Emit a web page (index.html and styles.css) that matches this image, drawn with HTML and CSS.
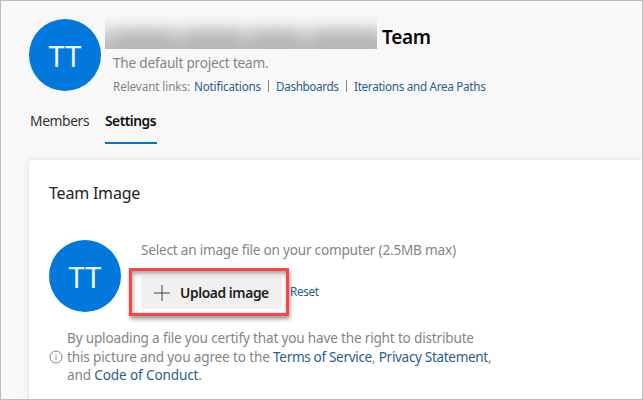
FILE: index.html
```html
<!DOCTYPE html>
<html lang="en">
<head>
<meta charset="utf-8">
<title>Team settings</title>
<link rel="stylesheet" href="styles.css">
</head>
<body>
<div class="page">
  <header class="header">
    <div class="avatar">TT</div>
    <div class="info">
      <div class="title-row">
        <div class="redacted"><i class="smudge s1"></i><i class="smudge s2"></i><i class="smudge s3"></i><i class="smudge s4"></i></div>
        <h1 class="title">Team</h1>
      </div>
      <p class="description">The default project team.</p>
      <nav class="links"><span class="label">Relevant links:</span><a class="l-notif">Notifications</a><i class="sep"></i><a class="l-dash">Dashboards</a><i class="sep"></i><a class="l-iter">Iterations and Area Paths</a></nav>
    </div>
  </header>
  <nav class="tabs">
    <a class="tab">Members</a>
    <a class="tab active">Settings</a>
  </nav>
  <main class="card">
    <h2 class="card-title">Team Image</h2>
    <div class="image-row">
      <div class="avatar">TT</div>
      <div class="picker">
        <p class="hint">Select an image file on your computer (2.5MB max)</p>
        <div class="actions">
          <button class="upload">
            <svg class="plus" viewBox="0 0 16 16"><path d="M8 0v16M0 8h16"/></svg>
            <span>Upload image</span>
            <i class="highlight"></i>
          </button>
          <a class="reset">Reset</a>
        </div>
      </div>
    </div>
    <div class="notice">
      <svg class="info-icon" viewBox="0 0 14 14"><circle cx="7" cy="7" r="6"/><path d="M7 6v4.2M7 3.6v1.2"/></svg>
      <p class="notice-text"><span class="n1">By uploading a file you certify that you have the right to distribute</span><br><span class="n2">this picture and you agree to the <a>Terms of Service</a>, <a>Privacy Statement</a>,</span><br><span class="n3">and <a>Code of Conduct</a>.</span></p>
    </div>
  </main>
</div>
</body>
</html>
```
FILE: styles.css
```css
* { box-sizing: border-box; }
body { margin: 0; font-family: "Noto Sans", "Open Sans", sans-serif; }
h1, h2, p { margin: 0; font-weight: 400; }
a { color: #286090; }
.page {
  width: 643px; height: 400px; overflow: hidden;
  border: 1px solid #bdbdbd; background: #f8f8f8;
  white-space: nowrap;
}
.header { display: flex; height: 90px; margin: 14px 0 0 28px; }
.avatar {
  flex: none; width: 72px; height: 72px; border-radius: 50%;
  background: #0078dc; color: #eef6fd;
  font-size: 29px; line-height: 73px; text-align: center;
}
.header .avatar { margin-top: 4px; }
.info { margin-left: 4px; }
.title-row { display: flex; height: 34px; }
.redacted {
  position: relative; overflow: hidden; width: 272px; height: 34px;
  background: linear-gradient(#f7f7f7, #f0f0f0 20%, #d8d8d8 50%, #c2c2c2 80%, #bababa);
}
.smudge { position: absolute; top: 17px; height: 14px; background: #a4a4a4; filter: blur(7px); opacity: .5; }
.s1 { left: 12px; width: 54px; }
.s2 { left: 80px; width: 55px; }
.s3 { left: 149px; width: 43px; }
.s4 { left: 208px; width: 64px; }
.title { margin-left: 5px; padding-top: 8px; color: #080808; font-size: 19px; line-height: 28px; font-weight: 600; letter-spacing: -.3px; }
.description { margin: 4px 0 0 8px; color: #858585; font-size: 13.6px; line-height: 20px; letter-spacing: -.2px; }
.links { display: flex; align-items: center; height: 20px; margin: 3px 0 0 8px; font-size: 11.7px; line-height: 20px; letter-spacing: -.2px; }
.label { width: 81px; color: #858585; letter-spacing: -.1px; }
.l-notif { width: 67px; }
.l-dash { width: 63px; letter-spacing: -.35px; }
.l-iter { letter-spacing: -.3px; }
.sep { width: 1px; height: 12px; margin: 0 7px; background: #858585; }
.tabs { display: flex; height: 39px; margin-left: 29px; font-size: 13.8px; line-height: 31px; }
.tab { width: 75px; color: #303030; letter-spacing: -.38px; }
.tab.active { color: #101010; font-weight: 600; width: 52px; letter-spacing: -.5px; border-bottom: 2px solid #0078c8; }
.card {
  height: 260px; margin: 16px 0 0 28px; padding: 20px 0 0 20px;
  background: #fff; border-radius: 4px 0 0 0; box-shadow: 0 0 6px rgba(0,0,0,.11);
}
.card-title { color: #222; font-size: 16px; line-height: 26px; letter-spacing: -.2px; }
.image-row { display: flex; margin-top: 34px; height: 86px; }
.picker { margin-left: 20px; }
.hint { color: #858585; font-size: 13.6px; line-height: 20px; letter-spacing: -.22px; }
.actions { display: flex; align-items: center; margin-top: 16px; }
.upload {
  position: relative; display: flex; align-items: center;
  width: 141px; height: 33px; padding: 0 0 0 13px; border: 0; border-radius: 2px;
  background: #f0f0f0; color: #202020; font-family: inherit; font-size: 13.8px; font-weight: 600; letter-spacing: -.4px;
}
.plus { width: 16px; height: 16px; margin-right: 10px; fill: none; stroke: #444; stroke-width: 1; }
.highlight { position: absolute; left: -12px; top: -8px; width: 160px; height: 48px; border: 3px solid #ff4343; box-shadow: 1px 3px 4px rgba(0,0,0,.4), inset 1px 3px 4px rgba(0,0,0,.35); }
.reset { margin: 0 0 4px 8px; font-size: 11.7px; line-height: 20px; letter-spacing: -.3px; }
.notice { display: flex; align-items: center; margin-top: 3px; }
.info-icon { width: 14px; height: 14px; margin: 0 4px 1px 0; fill: none; stroke: #858585; stroke-width: 1; }
.notice-text { color: #858585; font-size: 13.6px; line-height: 18.7px; }
.n1 { letter-spacing: -.19px; }
.n2 { letter-spacing: -.16px; }
.n2 a { letter-spacing: -.35px; }
.n3 { letter-spacing: -.15px; }
```
